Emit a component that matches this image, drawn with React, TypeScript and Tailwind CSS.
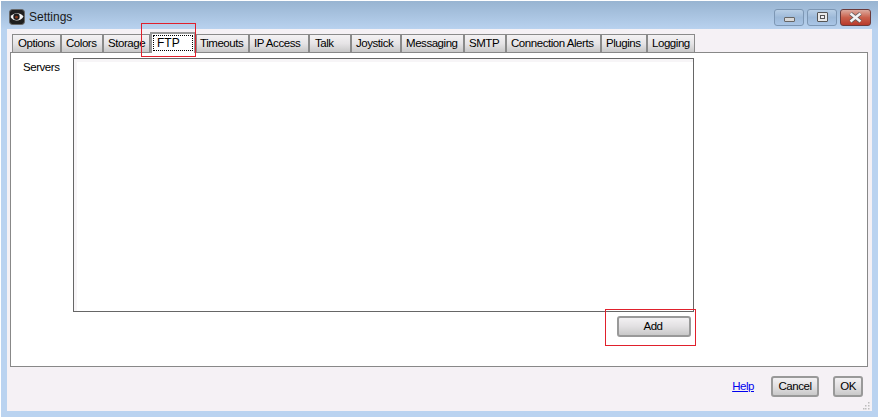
import React from "react";

const tabs = [
  { label: "Options", w: "w-[49px] pl-[5px]" },
  { label: "Colors", w: "w-[42px] pl-[4px]" },
  { label: "Storage", w: "w-[47px] pl-[4px]" },
  { label: "FTP", w: "w-[46px]", active: true },
  { label: "Timeouts", w: "w-[53px] pl-[3px]" },
  { label: "IP Access", w: "w-[60px] pl-[4px]" },
  { label: "Talk", w: "w-[42px] pl-[5px]" },
  { label: "Joystick", w: "w-[50px] pl-[4px]" },
  { label: "Messaging", w: "w-[63px] pl-[4px]" },
  { label: "SMTP", w: "w-[42px] pl-[4px]" },
  { label: "Connection Alerts", w: "w-[95px] pl-[4px]" },
  { label: "Plugins", w: "w-[46px] pl-[4px]" },
  { label: "Logging", w: "w-[48px] pl-[4px]" },
];

function EyeIcon() {
  return (
    <svg width="16" height="16" viewBox="0 0 16 16">
      <rect x="0.5" y="0.5" width="15" height="15" rx="3" fill="#1f1f1f" stroke="#666" />
      <path d="M1.5 8C4 3.5 11 3 14.5 7.5C12 12.5 4.5 13 1.5 8Z" fill="#f4f4f4" />
      <circle cx="7.5" cy="7.8" r="3.2" fill="#1c1c1c" />
      <circle cx="7.5" cy="8.2" r="1.4" fill="#8a3a1c" />
    </svg>
  );
}

function CaptionButton({ kind }: { kind: "min" | "max" | "close" }) {
  if (kind === "close") {
    return (
      <div className="w-[31px] h-[17px] rounded-[3px] border border-[#6b3a3a] bg-gradient-to-b from-[#dba99e] via-[#c9604c] to-[#b8392b] flex items-center justify-center">
        <svg width="15" height="11" viewBox="0 0 15 11">
          <path d="M2.5 1.5L12.5 9.5M12.5 1.5L2.5 9.5" stroke="#5a5a5a" strokeWidth="4" />
          <path d="M2.5 1.5L12.5 9.5M12.5 1.5L2.5 9.5" stroke="#f4f4f4" strokeWidth="2.4" />
        </svg>
      </div>
    );
  }
  return (
    <div className="w-[30px] h-[17px] rounded-[3px] border border-[#7d97b4] bg-gradient-to-b from-[#b9cfe6] via-[#9db9d8] to-[#a9c5e6] flex items-center justify-center">
      {kind === "min" ? (
        <div className="w-[11px] h-[5px] mt-[5px] rounded-[1px] border border-[#666] bg-[#d8d8d8]" />
      ) : (
        <div className="w-[11px] h-[10px] rounded-[1px] border border-[#555] bg-[#e8e8e8] flex items-center justify-center">
          <div className="w-[5px] h-[4px] border border-[#555] bg-[#f5f1f5]" />
        </div>
      )}
    </div>
  );
}

const buttonClass =
  "flex items-center justify-center rounded-[3px] border-2 border-[#999] bg-gradient-to-b from-[#f3f1f3] via-[#e2e0e2] to-[#c9c9c9] text-black";

export default function App() {
  return (
    <div className="w-[879px] h-[417px] bg-white p-px font-['Liberation_Sans',sans-serif] text-[11.5px] tracking-[-0.45px] text-black overflow-hidden">
      <div className="w-[877px] h-[416px] flex flex-col bg-gradient-to-b from-[#98b4d1] to-[#bad3f0] from-0% to-[7%] bg-[#bed3ef]">
        <div className="h-[28px] flex items-center pt-[4px] pl-[8px] pr-[7px] shrink-0">
          <EyeIcon />
          <span className="ml-[4px] text-[12px] tracking-normal text-[#1a1a1a]">Settings</span>
          <div className="ml-auto flex gap-[3px]">
            <CaptionButton kind="min" />
            <CaptionButton kind="max" />
            <CaptionButton kind="close" />
          </div>
        </div>
        <div className="mx-[6px] h-[382px] bg-[#f5f1f5] flex flex-col px-[3px] pt-[3px] relative">
          <div className="flex h-[20px] items-end pl-[2px] shrink-0 relative z-10">
            {tabs.map((t) =>
              t.active ? (
                <div key={t.label} className={`${t.w} h-[21px] -mb-px border-2 border-b-0 border-[#999] bg-white pt-[1px] px-[1px]`}>
                  <div className="h-[16px] border border-dotted border-black flex items-start text-[12px] tracking-normal leading-[14px] pl-[3px]">
                    {t.label}
                  </div>
                </div>
              ) : (
                <div key={t.label} className={`${t.w} h-[18px] border border-b-0 border-[#8a8a8a] bg-gradient-to-b from-[#f4f2f4] via-[#e6e4e6] to-[#c8c8c8] flex items-center whitespace-nowrap`}>
                  {t.label}
                </div>
              )
            )}
          </div>
          <div className="w-[858px] h-[315px] border-[1px] border-[#888] bg-white relative shrink-0 flex flex-col pl-[12px] pt-[5px]">
            <div className="flex">
              <span className="w-[50px] pt-[2px] leading-[14px]">Servers</span>
              <div className="w-[621px] h-[254px] border border-[#666] bg-white">
                <div className="h-full border-l-[3px] border-t-[3px] border-[#f7f5f7]" />
              </div>
            </div>
            <div className="w-[671px] flex justify-end pr-[3px] pt-[4px]">
              <div className={`${buttonClass} w-[74px] h-[21px] pr-[2px]`}>Add</div>
            </div>
          </div>
          <div className="flex items-center justify-end pr-[6px] pt-[9px]">
            <span className="text-[#0000ee] underline mr-[17px]">Help</span>
            <div className={`${buttonClass} w-[48px] h-[21px] mr-[14px]`}>Cancel</div>
            <div className={`${buttonClass} w-[30px] h-[21px]`}>OK</div>
          </div>
          <svg className="absolute right-[1px] bottom-[1px]" width="8" height="8" viewBox="0 0 8 8" fill="#bdbdbd">
            <rect x="5" y="0" width="1.5" height="1.5" />
            <rect x="5" y="3" width="1.5" height="1.5" />
            <rect x="2" y="3" width="1.5" height="1.5" />
            <rect x="5" y="6" width="1.5" height="1.5" />
            <rect x="2" y="6" width="1.5" height="1.5" />
            <rect x="0" y="6" width="1.5" height="1.5" />
          </svg>
          <div className="absolute z-20 left-[134px] top-[-6px] w-[55px] h-[34px] border border-[#e0202c]" />
          <div className="absolute z-20 left-[598px] top-[280px] w-[91px] h-[37px] border border-[#e0202c]" />
        </div>
      </div>
    </div>
  );
}
